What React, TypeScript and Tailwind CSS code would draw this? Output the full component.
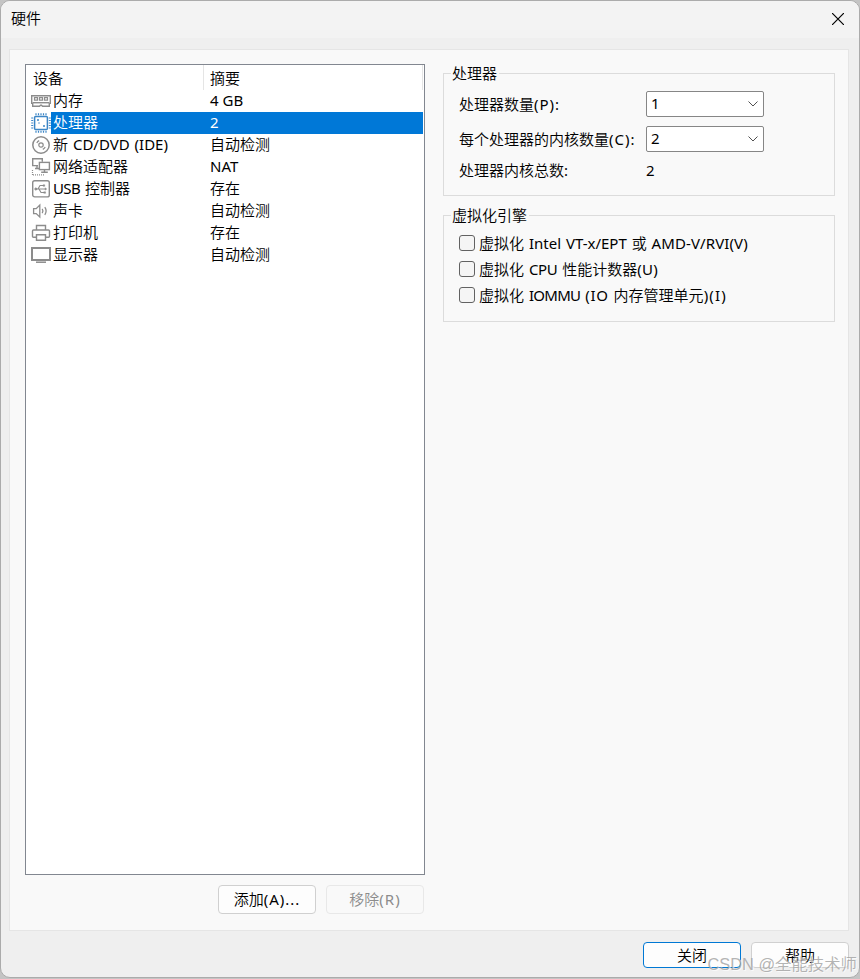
import { ReactNode } from 'react';

interface Device {
  name: ReactNode;
  summary: ReactNode;
  icon: ReactNode;
}

const MemoryIcon = () => (
  <svg width="20" height="22" viewBox="0 0 20 22" fill="none" stroke="#8c8c8c">
    <path d="M.7 5.7h18.6v7.6h-1v3h-6.8l-1-1h-1l-1 1H1.7v-3h-1z" strokeWidth="1.4" />
    <path d="M2 12.7h16" strokeWidth="1.4" />
    <path d="M3.5 7.7h3v2.4h-3zM8.5 7.7h3v2.4h-3zM13.5 7.7h3v2.4h-3z" strokeWidth="1.2" />
  </svg>
);

const ProcessorIcon = () => (
  <svg width="20" height="22" viewBox="0 0 20 22" fill="none" stroke="#3c86c6">
    <rect x="3.6" y="4.6" width="12.8" height="12.8" rx="1" strokeWidth="1.5" />
    <path d="M5 1.2v2M7.5 1.2v2M10 1.2v2M12.5 1.2v2M15 1.2v2M5 18.8v2M7.5 18.8v2M10 18.8v2M12.5 18.8v2M15 18.8v2" strokeWidth="1.2" />
    <path d="M.2 6h2M.2 8.5h2M.2 11h2M.2 13.5h2M.2 16h2M17.8 6h2M17.8 8.5h2M17.8 11h2M17.8 13.5h2M17.8 16h2" strokeWidth="1.2" />
    <path d="M6 8h2M12 14h2M7.5 11h1" strokeWidth="1.6" />
  </svg>
);

const DiscIcon = () => (
  <svg width="20" height="22" viewBox="0 0 20 22" fill="none" stroke="#8c8c8c">
    <circle cx="10" cy="11" r="8.2" strokeWidth="1.5" />
    <circle cx="10" cy="11" r="2.2" strokeWidth="1.2" />
    <path d="M5.8 9a5 5 0 0 1 2.4-2.4M14.2 13a5 5 0 0 1-2.4 2.4" strokeWidth="1.2" />
  </svg>
);

const NetworkIcon = () => (
  <svg width="20" height="22" viewBox="0 0 20 22" fill="none" stroke="#8c8c8c">
    <path d="M7 9.6H1.7V2.7h9.6v3M4 12.5h4M6 9.8v2.7" strokeWidth="1.4" />
    <rect x="8.4" y="6.4" width="10" height="7.2" strokeWidth="1.4" />
    <path d="M13.5 14v2.3M10.2 16.3h6.6" strokeWidth="1.4" />
    <path d="M1.5 14v5M2 18.8h11" strokeDasharray="1 1" strokeWidth="1.2" />
  </svg>
);

const UsbIcon = () => (
  <svg width="20" height="22" viewBox="0 0 20 22" fill="none" stroke="#8c8c8c">
    <rect x="1.7" y="2.7" width="16.6" height="16.2" rx="2" strokeWidth="1.4" />
    <path d="M5 11h9M7 11l2-3.5h3M8 11l2 3.5h3" strokeWidth="1.1" />
    <circle cx="4.8" cy="11" r="1" fill="#8c8c8c" />
    <path d="M12 6.8h1.8v1.5H12zM12.8 13.8h1.8v1.5h-1.8zM14 9.8l1.8 1.2-1.8 1.2z" fill="#8c8c8c" strokeWidth=".4" />
  </svg>
);

const SoundIcon = () => (
  <svg width="20" height="22" viewBox="0 0 20 22" fill="none" stroke="#8c8c8c">
    <path d="M2.6 8.6h2.6L8.8 5v12l-3.6-3.4H2.6z" strokeWidth="1.3" />
    <path d="M11.2 8.8q1.5 2.2 0 4.4M13.8 7.2q2.6 3.8 0 7.6" strokeWidth="1.3" />
  </svg>
);

const PrinterIcon = () => (
  <svg width="20" height="22" viewBox="0 0 20 22" fill="none" stroke="#8c8c8c" strokeWidth="1.4">
    <path d="M5.5 8V3.5h9V8" />
    <path d="M5 15.3H2.5q-1 0-1-1V9q0-1 1-1h15q1 0 1 1v5.3q0 1-1 1H15" />
    <path d="M5.5 12.7h9v5.6h-9z" />
  </svg>
);

const DisplayIcon = () => (
  <svg width="20" height="22" viewBox="0 0 20 22" fill="none" stroke="#8c8c8c">
    <rect x="1" y="4" width="18" height="12" strokeWidth="2" />
    <path d="M5 18.2h10" strokeWidth="1.5" />
  </svg>
);

// Latin runs are set a little heavier than the Chinese text around them
const Latin = ({ children, className = '' }: { children: string; className?: string }) => (
  <span className={`font-normal ${className}`}>{children}</span>
);

const Key = ({ children }: { children: string }) => <Latin className="tracking-[1px]">{children}</Latin>;

const devices: Device[] = [
  { name: '内存', summary: <Latin>4 GB</Latin>, icon: <MemoryIcon /> },
  { name: '处理器', summary: <Latin>2</Latin>, icon: <ProcessorIcon /> },
  { name: <>新 <Latin>CD/DVD (IDE)</Latin></>, summary: '自动检测', icon: <DiscIcon /> },
  { name: '网络适配器', summary: <Latin>NAT</Latin>, icon: <NetworkIcon /> },
  { name: <><Latin className="tracking-[-0.6px]">USB</Latin> 控制器</>, summary: '存在', icon: <UsbIcon /> },
  { name: '声卡', summary: '自动检测', icon: <SoundIcon /> },
  { name: '打印机', summary: '存在', icon: <PrinterIcon /> },
  { name: '显示器', summary: '自动检测', icon: <DisplayIcon /> },
];

const SELECTED = 1;

const DeviceList = () => (
  <div className="h-[811px] w-[400px] border border-[#828790] bg-white">
    <div className="flex h-[25px] items-center">
      <div className="flex h-full w-[178px] items-center border-r border-[#e5e5e5] pl-[7px]">设备</div>
      <div className="flex h-full w-[219px] items-center border-r border-[#e5e5e5] pl-1.5">摘要</div>
    </div>
    {devices.map((device, index) => (
      <div key={index} className="flex h-[22px] items-center pl-[5px]">
        {device.icon}
        <div
          className={
            index === SELECTED
              ? 'flex h-full w-[372px] items-center bg-[#0078d7] pb-0.5 text-white'
              : 'flex h-full w-[372px] items-center pb-0.5'
          }
        >
          <span className="w-[157px] pl-0.5 [word-spacing:1px]">{device.name}</span>
          <span className="pl-0.5">{device.summary}</span>
        </div>
      </div>
    ))}
  </div>
);

const Select = ({ value }: { value: string }) => (
  <button
    type="button"
    className="flex h-[26px] w-[118px] items-center justify-between rounded-[2px] border border-[#868686] bg-white pr-[5px] pl-1"
  >
    <span className="pb-0.5 font-normal">{value}</span>
    <svg width="10" height="6" viewBox="0 0 10 6" fill="none" stroke="#505050">
      <path d="M.5.5 5 5 9.5.5" />
    </svg>
  </button>
);

const Option = ({ children }: { children: ReactNode }) => (
  <label className="flex h-[26px] items-center gap-1">
    <input
      type="checkbox"
      className="size-4 shrink-0 appearance-none rounded-[3px] border border-[#626262] bg-[#f5f5f5]"
    />
    <span className="pb-px [word-spacing:1px]">{children}</span>
  </label>
);

const Button = ({ children, className }: { children: ReactNode; className: string }) => (
  <button type="button" className={`w-[98px] rounded border text-center ${className}`}>
    {children}
  </button>
);

const App = () => (
  <div className="h-[979px] w-[860px] overflow-hidden bg-[#c4c4c4] font-['Noto_Sans','Noto_Sans_CJK_SC',sans-serif] text-[15px] leading-5 font-[350] whitespace-nowrap text-black">
    <div className="relative flex h-[978px] w-[860px] flex-col rounded-[10px] border border-[#ababab] bg-[#efefef]">
      <header className="flex h-[37px] shrink-0 items-center justify-between rounded-t-[9px] bg-[#f3f3f3] pr-[15px] pb-[3px] pl-2.5">
        <h1 className="font-[350]">硬件</h1>
        <svg className="mt-0.5" width="12" height="12" viewBox="0 0 12 12" fill="none" stroke="#000" strokeWidth="1.2">
          <path d="m0 0 12 12M12 0 0 12" />
        </svg>
      </header>

      <main className="mt-[11px] ml-2 flex h-[882px] w-[840px] shrink-0 border border-[#e5e5e5] bg-[#f9f9f9]">
        <section className="pt-3.5 pl-[15px]">
          <DeviceList />
          <div className="mt-[10px] mr-px flex justify-end gap-2.5">
            <Button className="h-[29px] border-[#d0d0d0] bg-[#fdfdfd] pb-px">
              添加<Key>(A)...</Key>
            </Button>
            <Button className="h-[29px] border-[#e8e8e8] bg-[#f9f9f9] pb-px text-[#8c8c8c]">
              移除<Key>(R)</Key>
            </Button>
          </div>
        </section>

        <section className="ml-[18px] w-[392px] pt-[13px]">
          <fieldset className="h-[133px] border border-[#dcdcdc] px-[15px]">
            <legend className="-ml-2 h-5 pr-0.5 pl-px">处理器</legend>
            <div className="mt-2 flex items-center">
              <span className="w-[187px] pb-px">
                处理器数量<Key>(P):</Key>
              </span>
              <Select value="1" />
            </div>
            <div className="mt-[9px] flex items-center">
              <span className="w-[187px] pb-px">
                每个处理器的内核数量<Key>(C):</Key>
              </span>
              <Select value="2" />
            </div>
            <div className="mt-2 flex items-center">
              <span className="w-[187px]">
                处理器内核总数<Key>:</Key>
              </span>
              <Latin>2</Latin>
            </div>
          </fieldset>

          <fieldset className="mt-[9px] h-[117px] border border-[#dcdcdc] px-[15px]">
            <legend className="-ml-2 h-5 pr-0.5 pl-px">虚拟化引擎</legend>
            <div className="mt-[5px]">
              <Option>
                虚拟化 <Latin>Intel VT-x/EPT</Latin> 或 <Latin className="tracking-[0.1px]">AMD-V/RVI(V)</Latin>
              </Option>
              <Option>
                虚拟化 <Latin className="tracking-[-0.4px]">CPU</Latin> 性能计数器<Latin className="tracking-[0.3px]">(U)</Latin>
              </Option>
              <Option>
                虚拟化 <Latin className="tracking-[-0.7px]">IOMMU</Latin> <Latin className="tracking-[0.7px]">(IO</Latin>{' '}
                内存管理单元<Latin className="tracking-[1.2px]">)(I)</Latin>
              </Option>
            </div>
          </fieldset>
        </section>
      </main>

      <footer className="mt-[11px] mr-2.5 flex justify-end gap-2.5">
        <Button className="h-[26px] border-[#0078d4] bg-[#fdfdfd] pb-px">关闭</Button>
        <Button className="h-[26px] border-[#d0d0d0] bg-[#fdfdfd] pb-px">帮助</Button>
      </footer>

      <div className="absolute right-0.5 bottom-[3px] font-['Liberation_Sans','Noto_Sans_CJK_SC',sans-serif] text-[16.4px] text-[#a0a0a0]/80 [text-shadow:1px_1px_0_#ffffffaa]">
        CSDN @全能技术师
      </div>
    </div>
  </div>
);

export default App;
